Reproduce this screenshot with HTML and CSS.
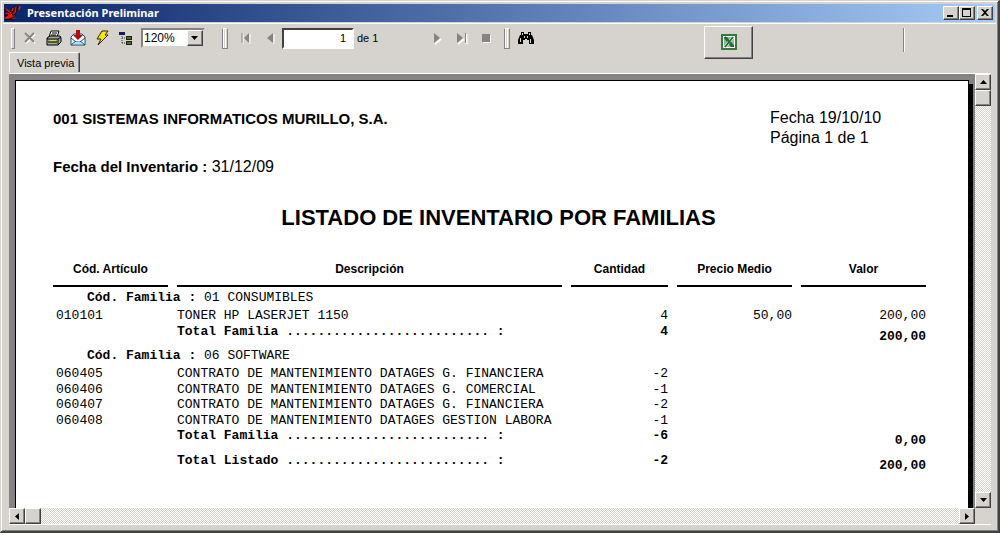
FILE: index.html
```html
<!DOCTYPE html>
<html lang="es">
<head>
<meta charset="utf-8">
<title>Presentación Preliminar</title>
<link rel="stylesheet" href="styles.css">
</head>
<body>
<div class="window">
  <header class="titlebar">
    <svg class="logo" width="18" height="16" viewBox="0 0 18 16" aria-hidden="true">
      <path d="M1 4l5 3 2-2-1-3 3 2 1-3 2 1 2-1-2 4-1 4-3 2 2 3-4 1-6 0 1-3-2-2 3-1-3-2z" fill="#1c0509"/>
      <path d="M2 4l5 4M2 8l5 2M2 13h8l-3-4zM8 6l1-3M11 6l1-4M15 5l1-4M9 9l3-3" fill="#e01818" stroke="#e01818" stroke-width="1.6"/>
      <path d="M5 14l5-2M7 8l2 2" stroke="#111" />
    </svg>
    <h1 class="title">Presentación Preliminar</h1>
    <div class="controls">
      <button class="ctl" aria-label="Minimizar"><svg width="12" height="10" viewBox="0 0 12 10"><path d="M2 7h6v2H2z"/></svg></button>
      <button class="ctl" aria-label="Maximizar"><svg width="12" height="10" viewBox="0 0 12 10"><path d="M1 0h9v9H1zM2 2v6h7V2z" fill-rule="evenodd"/></svg></button>
      <button class="ctl close" aria-label="Cerrar"><svg width="12" height="10" viewBox="0 0 12 10"><path d="M2 1h2l2 2 2-2h2L7 4.500 10 8H8L6 6 4 8H2l3-3.500z"/></svg></button>
    </div>
  </header>

  <div class="top">
    <div class="left">
      <div class="toolbar">
        <span class="grip"></span>
        <button class="tool" aria-label="Cancelar"><svg width="16" height="16" viewBox="0 0 16 16"><path d="M4 4l9 9M13 4l-9 9" stroke="#fff" stroke-width="2"/><path d="M3 3l9 9M12 3l-9 9" stroke="#868482" stroke-width="2"/></svg></button>
        <button class="tool" aria-label="Imprimir"><svg width="16" height="16" viewBox="0 0 16 16"><path d="M5 1h8l-2 6H3z" fill="#fff" stroke="#000"/><path d="M6 3h5M5 5h5" stroke="#000"/><path d="M1 8l3-2h10l1 2v4l-3 3H1z" fill="#a5ab98" stroke="#000"/><path d="M1 9h11v5M12 9l3-2M2 12h9" fill="none" stroke="#000"/><path d="M4 10h6v1H4z" fill="#e4e600"/></svg></button>
        <button class="tool" aria-label="Exportar"><svg width="16" height="16" viewBox="0 0 16 16"><path d="M1 7l3-3h8l3 3v8H1z" fill="#fff" stroke="#184878"/><path d="M1 8l5 4h4l5-4M1 15l5-4M15 15l-5-4" fill="none" stroke="#15506c"/><path d="M3 14l3-2h4l3 2z" fill="#a2e3ef"/><path d="M6 0h4v5h3L8 10 3 5h3z" fill="#b40a12"/></svg></button>
        <button class="tool" aria-label="Actualizar"><svg width="16" height="16" viewBox="0 0 16 16"><path d="M8 1h6l-3 4h3L4 15l3-6H3z" fill="#ffe900" stroke="#2b2400"/></svg></button>
        <button class="tool" aria-label="Árbol de grupos"><svg width="16" height="16" viewBox="0 0 16 16"><path d="M1 2h6v3H1z" fill="#16165c"/><path d="M4 6v8M4 8h4M4 13h4" stroke="#333" stroke-dasharray="1 1"/><path d="M8 6h6v4H8zM8 11h6v4H8z" fill="#182408"/><path d="M9 8h4M9 13h4" stroke="#92a46c"/></svg></button>
        <span class="zoom">
          <select class="zoom-select" aria-label="Zoom"><option>120%</option></select>
          <span class="drop"><svg width="8" height="4" viewBox="0 0 8 4"><path d="M0 0h7L3.500 4z"/></svg></span>
        </span>
        <span class="grip second"></span>
        <button class="tool nav" aria-label="Primera página"><svg width="16" height="16" viewBox="0 0 16 16"><path d="M5 4v10M12 4v10" stroke="#fff"/><path d="M4 3v10" stroke="#868482"/><path d="M11 3v10L6 8z" fill="#868482"/></svg></button>
        <button class="tool nav" aria-label="Página anterior"><svg width="16" height="16" viewBox="0 0 16 16"><path d="M12 4v10" stroke="#fff"/><path d="M11 3v10L5 8z" fill="#868482"/></svg></button>
        <input class="page" type="text" value="1" aria-label="Página">
        <span class="of">de 1</span>
        <button class="tool nav" aria-label="Página siguiente"><svg width="16" height="16" viewBox="0 0 16 16"><path d="M5 14l6-5" stroke="#fff" stroke-width="2"/><path d="M4 3v10l6-5z" fill="#868482"/></svg></button>
        <button class="tool nav" aria-label="Última página"><svg width="16" height="16" viewBox="0 0 16 16"><path d="M4 14l6-5M12.500 4v10" stroke="#fff" stroke-width="2"/><path d="M3 3v10l6-5z" fill="#868482"/><path d="M11.500 3v10" stroke="#868482"/></svg></button>
        <button class="tool nav" aria-label="Detener"><svg width="16" height="16" viewBox="0 0 16 16"><path d="M5 5h8v8H5z" fill="#fff"/><path d="M4 4h8v8H4z" fill="#868482"/></svg></button>
        <span class="grip third"></span>
        <button class="tool" aria-label="Buscar"><svg width="16" height="16" viewBox="0 0 16 16"><path d="M3 2h3v2h4V2h3v3h1l2 5v4h-5v-4H9V9H7v1H5v4H0v-4l2-5h1z"/><path d="M4.500 3v2M11.500 3v2M2.500 8v4M12.500 9v4M6.500 6v2M9.500 6v2" stroke="#d8d5cf"/></svg></button>
      </div>
      <button class="tab">Vista previa</button>
    </div>
    <div class="right">
      <button class="excel" aria-label="Exportar a Excel"><svg width="16" height="16" viewBox="0 0 16 16"><path d="M0 0h16v16H0z" fill="#36783e"/><path d="M2 2h12v12H2z" fill="#fff"/><path d="M3 3h10v10H3z" fill="#8db493"/><path d="M3 3h3l7 9v1h-3L3 4z" fill="#1f6b2b"/><path d="M12 3L4 13" stroke="#fff" stroke-width="3"/><path d="M12 3L4 13M4 3l8 9" stroke="#286f32" stroke-width="2"/></svg></button>
      <span class="divider"></span>
    </div>
  </div>

  <main class="viewer">
    <div class="canvas">
      <article class="paper">
        <div class="heading">
          <div>
            <p class="company">001 SISTEMAS INFORMATICOS MURILLO, S.A.</p>
            <p class="inventory"><b>Fecha del Inventario :</b> 31/12/09</p>
          </div>
          <div class="meta">
            <p>Fecha 19/10/10</p>
            <p>Página 1 de 1</p>
          </div>
        </div>
        <h2 class="report-title">LISTADO DE INVENTARIO POR FAMILIAS</h2>
        <table class="report">
          <colgroup><col class="c-code"><col><col class="c-qty"><col class="c-price"><col class="c-value"></colgroup>
          <thead>
            <tr><th>Cód. Artículo</th><th>Descripción</th><th>Cantidad</th><th>Precio Medio</th><th>Valor</th></tr>
          </thead>
          <tbody>
            <tr class="family"><td colspan="5"><b>Cód. Familia :</b> 01 CONSUMIBLES</td></tr>
            <tr><td class="code">010101</td><td>TONER HP LASERJET 1150</td><td class="num">4</td><td class="num">50,00</td><td class="num">200,00</td></tr>
            <tr class="total"><td></td><td>Total Familia .......................... :</td><td class="num">4</td><td></td><td class="num sum">200,00</td></tr>
          </tbody>
          <tbody>
            <tr class="family"><td colspan="5"><b>Cód. Familia :</b> 06 SOFTWARE</td></tr>
            <tr><td class="code">060405</td><td>CONTRATO DE MANTENIMIENTO DATAGES G. FINANCIERA</td><td class="num">-2</td><td></td><td></td></tr>
            <tr><td class="code">060406</td><td>CONTRATO DE MANTENIMIENTO DATAGES G. COMERCIAL</td><td class="num">-1</td><td></td><td></td></tr>
            <tr><td class="code">060407</td><td>CONTRATO DE MANTENIMIENTO DATAGES G. FINANCIERA</td><td class="num">-2</td><td></td><td></td></tr>
            <tr><td class="code">060408</td><td>CONTRATO DE MANTENIMIENTO DATAGES GESTION LABORA</td><td class="num">-1</td><td></td><td></td></tr>
            <tr class="total"><td></td><td>Total Familia .......................... :</td><td class="num">-6</td><td></td><td class="num sum">0,00</td></tr>
          </tbody>
          <tfoot>
            <tr class="total"><td></td><td>Total Listado .......................... :</td><td class="num">-2</td><td></td><td class="num sum">200,00</td></tr>
          </tfoot>
        </table>
      </article>
    </div>
    <div class="vscroll">
      <button class="sb" aria-label="Subir"><svg width="7" height="4" viewBox="0 0 7 4"><path d="M0 4h7L3.500 0z"/></svg></button>
      <span class="sb"></span>
      <button class="sb end" aria-label="Bajar"><svg width="7" height="4" viewBox="0 0 7 4"><path d="M0 0h7L3.500 4z"/></svg></button>
    </div>
    <div class="hscroll">
      <button class="sb" aria-label="Izquierda"><svg width="4" height="7" viewBox="0 0 4 7"><path d="M4 0v7L0 3.500z"/></svg></button>
      <span class="sb"></span>
      <button class="sb end" aria-label="Derecha"><svg width="4" height="7" viewBox="0 0 4 7"><path d="M0 0v7l4-3.500z"/></svg></button>
    </div>
  </main>
</div>
</body>
</html>
```
FILE: styles.css
```css
* { box-sizing: border-box; }

body {
  margin: 0;
  font-family: "Liberation Sans", Arial, sans-serif;
  font-size: 11px;
  color: #000;
}

h1, h2, p { margin: 0; }
button { margin: 0; padding: 0; font: inherit; color: inherit; }
svg { display: block; flex: none; }

.window {
  display: flex;
  flex-direction: column;
  height: 100vh;
  padding: 2px;
  background: #d6d3ce;
  border: 1px solid #d6d3ce;
  border-right: 2px solid #424142;
  border-bottom: 2px solid #424142;
  box-shadow: inset 1px 1px #fff, inset -1px -1px #848284;
}

.titlebar {
  display: flex;
  align-items: center;
  gap: 5px;
  height: 18px;
  margin: 1px;
  padding: 0 2px 0 0;
  background: linear-gradient(to right, #0a246a, #a5cbf7);
}

.title {
  flex: 1;
  font: bold 11px/18px "Noto Sans", "Open Sans", sans-serif;
  color: #fff;
}

.controls { display: flex; }

.ctl {
  display: flex;
  align-items: center;
  justify-content: center;
  width: 16px;
  height: 14px;
}
.ctl.close { margin-left: 2px; }

.ctl, .sb, .drop, .excel {
  background: #d6d3ce;
  border: 1px solid;
  border-color: #fff #424142 #424142 #fff;
  box-shadow: inset -1px -1px #848284;
}

.top {
  display: flex;
  height: 50px;
  padding: 0 5px 0 6px;
  border-top: 1px solid #fff;
}

.left { flex: 1; }

.toolbar {
  display: flex;
  align-items: center;
  height: 28px;
}

.grip {
  flex: none;
  width: 4px;
  height: 21px;
  margin-left: 2px;
  border: 1px solid;
  border-color: #fff #848284 #848284 #fff;
}
.grip.second, .grip.third {
  width: 6px;
  border-left: 1px solid #848284;
  box-shadow: inset 1px 0 #fff, inset 2px 0 #d6d3ce, inset 3px 0 #fff;
}
.grip.second { margin: 0 6px 0 17px; }
.grip.third { margin: 0 4px 0 6px; }

.tool {
  display: flex;
  align-items: center;
  justify-content: center;
  width: 24px;
  height: 24px;
  background: none;
  border: 0;
}
.grip + .tool { margin-left: 3px; }
.grip.second + .tool, .grip.third + .tool { margin-left: 0; }

.zoom {
  display: flex;
  position: relative;
  width: 64px;
  height: 20px;
  margin-left: 3px;
}
.zoom-select {
  appearance: none;
  width: 100%;
  padding: 0 1px;
  font: 12px "Liberation Sans", Arial, sans-serif;
  color: #000;
  background: #fff;
  border: 2px solid;
  border-color: #848284 #d6d3ce #d6d3ce #848284;
  border-radius: 0;
}
.drop {
  display: flex;
  position: absolute;
  top: 2px;
  right: 2px;
  bottom: 2px;
  width: 16px;
  align-items: center;
  justify-content: center;
  pointer-events: none;
}

.page {
  width: 72px;
  height: 21px;
  padding: 0 6px;
  font: 11px "Liberation Sans", Arial, sans-serif;
  text-align: right;
  background: #fff;
  border: 2px solid;
  border-color: #424142 #fff #fff #424142;
}
.of { width: 72px; padding-left: 3px; }

.tab {
  display: block;
  height: 20px;
  padding: 0 5px 0 7px;
  background: #d6d3ce;
  border: 1px solid;
  border-color: #fff #424142 #d6d3ce #fff;
  border-bottom: 0;
  border-radius: 2px 2px 0 0;
  box-shadow: inset -1px 0 #848284;
}

.right {
  display: flex;
  align-items: flex-start;
  width: 287px;
  padding-top: 2px;
}
.excel {
  display: flex;
  align-items: center;
  justify-content: center;
  width: 49px;
  height: 33px;
  padding-bottom: 2px;
}
.divider {
  width: 2px;
  height: 24px;
  margin: 2px 0 0 150px;
  border-left: 1px solid #848284;
  border-right: 1px solid #fff;
}

.viewer {
  display: grid;
  flex: 1;
  grid-template: minmax(0, 1fr) 16px / minmax(0, 1fr) 16px;
  min-height: 0;
  margin: 0 5px 4px 6px;
  border-top: 1px solid #fff;
  border-bottom: 1px solid #fff;
}

.canvas {
  padding: 6px 6px 0;
  overflow: hidden;
  background: #848284;
}

.paper {
  min-height: 100%;
  padding: 26px 33px 40px 28px;
  background: #fff;
  border: 1px solid #000;
  border-bottom: 0;
  box-shadow: 4px 4px #000;
}

.heading {
  display: flex;
  justify-content: space-between;
  padding: 0 0 0 9px;
  font-size: 16px;
  line-height: 20px;
}
.company {
  margin: 2px 0 28px;
  font-size: 15px;
  font-weight: bold;
}
.inventory b { font-size: 15px; }
.meta { width: 165px; padding-top: 1px; }

.report-title {
  margin: 27px 0 30px;
  padding-left: 18px;
  font-size: 22px;
  line-height: 28px;
  text-align: center;
}

.report {
  width: 100%;
  table-layout: fixed;
  border-spacing: 9px 0;
  font: 13px/15px "Liberation Mono", "Courier New", monospace;
}
.c-code { width: 115px; }
.c-qty { width: 97px; }
.c-price { width: 115px; }
.c-value { width: 125px; }

.report th {
  height: 25px;
  padding: 0 0 8px;
  font: bold 12px/15px "Liberation Sans", Arial, sans-serif;
  border-bottom: 2px solid #000;
}
.report td {
  height: 15px;
  padding: 0;
  white-space: nowrap;
  vertical-align: top;
}
.report tr:nth-child(even) td { height: 16px; }
.report .family td {
  height: 21px;
  padding: 3px 0 0 34px;
}
.report .code { padding-left: 3px; }
.report .num { text-align: right; }
.report .total { font-weight: bold; }
.report .total .sum { padding: 5px 0 1px; }
.report tfoot td { padding-top: 4px; }
.report tfoot .total .sum { padding-top: 9px; }

.vscroll, .hscroll {
  display: flex;
  background: repeating-conic-gradient(#fff 0% 25%, #d6d3ce 0% 50%) 0 0 / 2px 2px;
}
.vscroll { flex-direction: column; }

.sb {
  display: flex;
  flex: none;
  align-items: center;
  justify-content: center;
  width: 16px;
  height: 16px;
}
.sb.end { margin: auto 0 0 auto; }
```
